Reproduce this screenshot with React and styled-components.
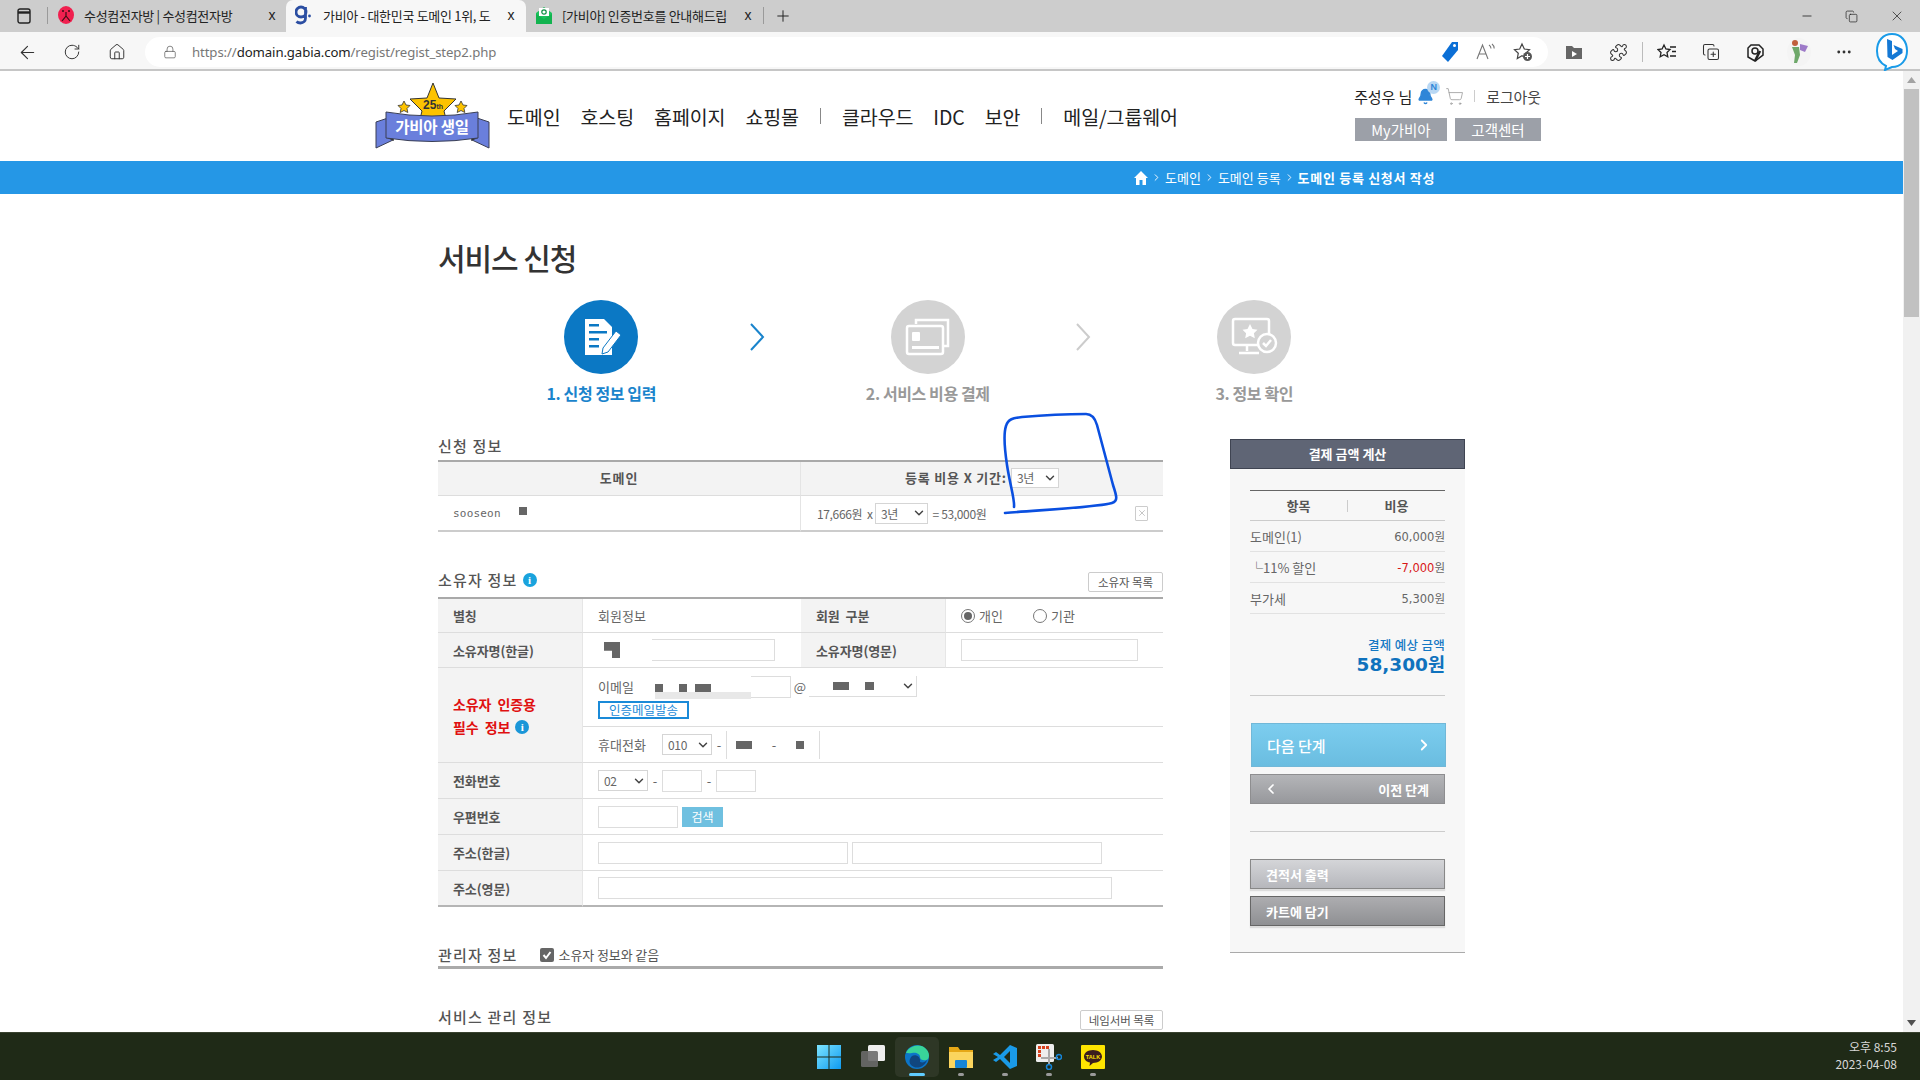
import React from "react";
import styled, { createGlobalStyle } from "styled-components";
import { ArrowLeft, RotateCw, Home, Lock, Puzzle, CopyPlus, Ellipsis, Minus, Copy, X, Plus, ChevronDown, ChevronRight, ChevronLeft, ShoppingCart, Bell } from "lucide-react";

const KR = `"Noto Sans CJK KR", "Liberation Sans", sans-serif`;
const DJ = `"DejaVu Sans", "Noto Sans CJK KR", sans-serif`;

const Global = createGlobalStyle`
  * { box-sizing: border-box; }
  html, body { margin: 0; padding: 0; overflow: hidden; background: #fff; }
  body { font-family: ${KR}; color: #555; }
`;

const Screen = styled.div`width:1920px;height:1080px;display:flex;flex-direction:column;overflow:hidden;`;

/* browser chrome */
const TabStrip = styled.div`height:32px;background:#cdcdcd;display:flex;align-items:stretch;flex:none;`;
const SideBtn = styled.div`width:47px;display:flex;align-items:center;justify-content:center;color:#222;`;
const TabSep = styled.div`width:1px;margin:7px 0 8px;background:#9a9a9a;flex:none;`;
const Tab = styled.div`
  width:${p => p.$w}px;flex:none;display:flex;align-items:center;padding:0 ${p => p.$pr}px 2px ${p => p.$pl}px;
  font-size:13px;color:#222;white-space:nowrap;
  ${p => p.$active ? "background:#f7f7f7;border-radius:7px 7px 0 0;" : ""}
`;
const TabIconSlot = styled.div`width:16px;height:18px;flex:none;display:flex;align-items:center;justify-content:center;`;
const TabText = styled.div`flex:1;margin-left:${p => p.$ml}px;letter-spacing:-0.3px;`;
const TabClose = styled.div`width:14px;font-family:"Liberation Sans",sans-serif;font-size:14px;line-height:14px;text-align:center;color:#222;flex:none;`;
const NewTab = styled.div`width:38px;display:flex;align-items:center;justify-content:center;color:#222;`;
const WinControls = styled.div`margin-left:auto;display:flex;align-items:center;padding-right:15px;gap:31px;color:#222;`;

const AddrBar = styled.div`height:39px;background:#f7f7f7;border-bottom:2px solid #c6c6c6;display:flex;align-items:center;padding-left:5px;flex:none;padding-top:3px;`;
const Slot = styled.div`width:${p => p.$w || 44}px;height:30px;flex:none;display:flex;align-items:center;justify-content:center;color:#333;`;
const NavSlots = styled.div`display:flex;gap:1px;`;
const Pill = styled.div`flex:1;height:30px;margin-left:6px;background:#fff;border-radius:15px;display:flex;align-items:center;padding:0 7px 0 18px;`;
const Url = styled.div`margin-left:15px;font-size:13.2px;color:#777;font-family:"Noto Sans","Liberation Sans",sans-serif;letter-spacing:-0.1px;b{font-weight:400;color:#222;}`;
const PillTools = styled.div`margin-left:auto;display:flex;`;
const Tools = styled.div`display:flex;align-items:center;margin-left:4px;padding-right:3px;`;
const ToolSep = styled.div`width:1px;height:20px;background:#bbb;margin:0 2px;`;

/* viewport */
const Viewport = styled.div`flex:1;display:flex;min-height:0;`;
const Page = styled.div`width:1903px;flex:none;overflow:hidden;position:relative;background:#fff;`;
const ScrollBar = styled.div`width:17px;flex:none;background:#f1f1f1;display:flex;flex-direction:column;align-items:center;`;
const ScrollArrow = styled.div`height:18px;display:flex;align-items:center;justify-content:center;`;
const ScrollThumb = styled.div`width:15px;height:228px;background:#c1c1c1;`;

/* site header */
const SiteHeader = styled.header`height:90px;display:flex;padding-left:375px;padding-right:362px;`;
const LogoBox = styled.div`width:115px;margin-top:11px;flex:none;`;
const Nav = styled.nav`display:flex;align-items:center;gap:20px;margin-left:17px;height:90px;font-size:19.5px;color:#222;letter-spacing:-0.1px;white-space:nowrap;`;
const NavSep = styled.span`width:1px;height:16px;background:#888;margin:0 1px;`;
const UserBox = styled.div`margin-left:auto;width:189px;padding-top:12px;display:flex;flex-direction:column;align-items:flex-end;`;
const UserLine = styled.div`height:26px;display:flex;align-items:center;font-size:15px;color:#222;white-space:nowrap;letter-spacing:-.1px;`;
const Logout = styled.span`color:#444;`;
const BellWrap = styled.span`position:relative;display:flex;margin:0 11px 0 5px;color:#2f86d8;`;
const BellBadge = styled.span`position:absolute;right:-6px;top:-7px;width:13px;height:13px;border-radius:50%;background:#b9d8f4;color:#2f86d8;font:700 9px/13px "Liberation Sans",sans-serif;text-align:center;`;
const UserSep = styled.span`width:1px;height:12px;background:#ccc;margin:0 11px 0 10px;`;
const UserBtns = styled.div`display:flex;gap:8px;margin-top:9px;`;
const GrayBtn = styled.div`width:${p => p.$w}px;height:23px;background:#9ca0a8;color:#fff;font-size:14.5px;display:flex;align-items:center;justify-content:center;`;

const Crumb = styled.div`height:33px;background:#2597e6;color:#fff;display:flex;align-items:center;padding-left:1134px;font-size:13px;white-space:nowrap;gap:3px;b{font-weight:700;letter-spacing:.7px;}`;

/* body */
const Body = styled.div`padding-left:438px;`;
const Title = styled.h1`margin:43px 0 0;height:40px;line-height:40px;font-size:30px;font-weight:500;letter-spacing:-1.1px;color:#333;`;
const Steps = styled.div`display:flex;margin-top:23px;height:106px;`;
const Step = styled.div`width:326.5px;flex:none;display:flex;flex-direction:column;align-items:center;`;
const Circle = styled.div`width:74px;height:74px;border-radius:50%;background:${p => p.$on ? "#0b78c4" : "#d3d3d3"};display:flex;align-items:center;justify-content:center;`;
const StepLabel = styled.div`margin-top:7px;height:24px;line-height:24px;font-size:16px;font-weight:700;letter-spacing:-0.4px;color:${p => p.$on ? "#1a84cc" : "#999"};`;
const StepArrow = styled.div`width:16px;height:28px;flex:none;margin:23px 0 0 -16px;`;

const Columns = styled.div`display:flex;align-items:flex-start;margin-top:33px;`;
const Left = styled.div`width:725px;flex:none;`;
const SectionHead = styled.div`display:flex;align-items:flex-start;height:${p => p.$h}px;margin-top:${p => p.$mt || 0}px;`;
const SectionTitle = styled.h2`margin:${p => p.$mt || 0}px 0 0;font-size:15px;line-height:18px;font-weight:500;color:#555;letter-spacing:1.2px;white-space:nowrap;display:flex;align-items:center;`;
const HeadBtn = styled.div`margin-left:auto;margin-top:${p => p.$mt || 0}px;width:${p => p.$w}px;height:20px;border:1px solid #ccc;border-radius:2px;background:#fff;font-size:11.5px;color:#555;display:flex;align-items:center;justify-content:center;letter-spacing:-0.1px;`;
const Info = styled.span`width:14px;height:14px;border-radius:50%;background:${p => p.$c || "#1aa3dd"};color:#fff;font:700 11px/14px "Liberation Serif",serif;text-align:center;margin-left:5px;display:inline-block;flex:none;letter-spacing:0;`;

const Tbl = styled.table`width:725px;border-collapse:separate;border-spacing:0;table-layout:fixed;border-top:2px solid #a9a9a9;font-size:12px;`;
const HCell = styled.th`height:${p => p.$h}px;background:#f3f3f3;border-bottom:1px solid #ddd;font-size:13px;font-weight:700;color:#555;${p => p.$line ? "border-left:1px solid #e4e4e4;" : ""}padding:0 0 2px;letter-spacing:.8px;`;
const HInner = styled.div`display:flex;align-items:center;justify-content:center;padding-left:${p => p.$pl || 0}px;white-space:nowrap;gap:4px;letter-spacing:.8px;`;
const RowCell = styled.td`height:36px;border-bottom:2px solid #ccc;padding:0;${p => p.$line ? "border-left:1px solid #e4e4e4;" : ""}`;
const CellFlex = styled.div`display:flex;align-items:center;padding-left:${p => p.$pl}px;color:#666;white-space:nowrap;letter-spacing:-.35px;`;
const Mono = styled.span`font-family:"DejaVu Sans Mono",monospace;font-size:11px;letter-spacing:.2px;color:#666;`;
const Mask = styled.span`display:inline-block;width:${p => p.$w}px;height:${p => p.$h}px;background:#666;flex:none;margin-left:${p => p.$ml || 0}px;margin-top:${p => p.$mt || 0}px;`;
const MaskStep = styled(Mask)`clip-path:polygon(0 0,100% 0,100% 100%,50% 100%,50% 55%,0 55%);`;
const Sel = styled.div`width:${p => p.$w}px;height:${p => p.$hh || 21}px;border:1px solid #d5d5d5;background:#fff;display:flex;align-items:center;justify-content:space-between;padding:0 1px 0 5px;font-size:12px;font-weight:400;color:#666;flex:none;margin:${p => p.$m || 0};letter-spacing:-.3px;`;
const RemoveBox = styled.div`width:13px;height:15px;border:1px solid #ccc;border-radius:1px;margin-left:auto;margin-right:15px;display:flex;align-items:center;justify-content:center;color:#777;`;

const FormTbl = styled(Tbl)`border-bottom:0;`;
const Th = styled.th`
  height:${p => p.$h}px;background:#f3f3f3;border-bottom:1px solid #ddd;padding:0 0 0 15px;text-align:left;font-size:${p => p.$red ? 14 : 13}px;font-weight:700;
  color:${p => p.$red ? "#e01010" : "#555"};border-right:1px solid #e6e6e6;letter-spacing:-.1px;word-spacing:3px;white-space:nowrap;
`;
const Td = styled.td`height:${p => p.$h}px;border-bottom:1px solid #ddd;padding:0 0 0 ${p => p.$pl ?? 15}px;color:#666;font-size:13px;`;
const LastTh = styled(Th)`border-bottom:2px solid #b5b5b5;`;
const LastTd = styled(Td)`border-bottom:2px solid #b5b5b5;`;
const RedLine = styled.div`height:23px;display:flex;align-items:center;`;
const FRow = styled.div`display:flex;align-items:center;white-space:nowrap;`;
const Input = styled.div`width:${p => p.$w}px;height:22px;border:1px solid #ddd;${p => p.$nl ? "border-left:0;" : ""}background:#fff;flex:none;margin-left:${p => p.$ml || 0}px;`;
const Radio = styled.span`width:14px;height:14px;border:1px solid #777;border-radius:50%;display:inline-flex;align-items:center;justify-content:center;background:#fff;flex:none;margin-right:4px;&::after{content:"";width:8px;height:8px;border-radius:50%;background:${p => p.$on ? "#666" : "transparent"};}`;
const RadioText = styled.span`width:${p => p.$w}px;flex:none;`;
const EmailLabel = styled.span`width:57px;flex:none;`;
const EmailMask = styled.div`width:96px;height:22px;flex:none;display:flex;align-items:flex-start;padding-top:8px;position:relative;&::after{content:"";position:absolute;left:0;right:0;bottom:-1px;height:7px;background:#e8e8e8;}`;
const At = styled.span`width:18px;text-align:center;flex:none;`;
const MaskSelect = styled.div`width:108px;height:21px;flex:none;border-bottom:1px solid #ddd;border-right:1px solid #ddd;display:flex;align-items:center;padding:0 1px 0 24px;`;
const SendBtn = styled.div`width:91px;height:18px;border:2px solid #1a8ad8;color:#1a8ad8;font-size:12.5px;line-height:12px;display:flex;align-items:center;justify-content:center;margin-top:3px;background:#fff;`;
const Dash = styled.span`width:${p => p.$w || 14}px;text-align:center;flex:none;`;
const PhoneLabel = styled.span`width:64px;flex:none;`;
const MaskPhone = styled.div`width:94px;height:28px;border-left:1px solid #ddd;border-right:1px solid #ddd;display:flex;align-items:center;padding-left:9px;flex:none;`;
const SearchBtn = styled.div`width:41px;height:20px;margin-left:4px;background:#6fc0e0;color:#fff;font-size:12px;display:flex;align-items:center;justify-content:center;`;
const CheckBox = styled.span`width:14px;height:14px;border-radius:2px;background:#666;color:#fff;display:inline-flex;align-items:center;justify-content:center;margin-left:22px;margin-right:5px;flex:none;`;
const CheckText = styled.span`font-size:13px;font-weight:400;color:#555;letter-spacing:-.1px;`;
const ThickRule = styled.div`height:3px;background:#aaa;`;

/* side panel */
const Panel = styled.aside`width:235px;margin-left:67px;flex:none;background:#f7f7f7;border-bottom:1px solid #aaa;height:514px;`;
const PanelHead = styled.div`height:30px;background:#5f6575;border:1px solid #3f4452;color:#fff;font-size:13px;font-weight:700;display:flex;align-items:center;justify-content:center;padding-bottom:2px;`;
const PanelInner = styled.div`padding:21px 20px 0;`;
const PHeadRow = styled.div`height:31px;border-top:1px solid #666;border-bottom:1px solid #ccc;display:flex;align-items:center;font-size:13px;font-weight:700;color:#555;`;
const PHeadCell = styled.div`flex:1;text-align:center;${p => p.$line ? "border-left:1px solid #ccc;" : ""}line-height:12px;`;
const PRow = styled.div`height:31px;border-bottom:1px solid #e2e2e2;display:flex;align-items:center;justify-content:space-between;font-size:11.5px;color:#666;font-family:${DJ};`;
const PLabel = styled.span`font-family:${KR};font-size:13px;`;
const Red = styled.span`color:#d81818;`;
const TotalLabel = styled.div`margin-top:23px;text-align:right;font-size:12.5px;color:#1478c4;font-weight:500;line-height:16px;letter-spacing:.3px;`;
const TotalValue = styled.div`text-align:right;font-family:${DJ};font-weight:700;font-size:18.5px;line-height:24px;color:#0f72bd;margin-top:0;`;
const PRule = styled.div`height:1px;background:#ccc;margin-top:${p => p.$mt}px;`;
const NextBtn = styled.div`height:44px;margin:27px -1px 0 1px;background:linear-gradient(#7ccdef,#6abde0);border:1px solid #71b8d8;color:#fff;font-size:15px;font-weight:500;display:flex;align-items:center;justify-content:space-between;padding:0 12px 0 15px;`;
const PrevBtn = styled.div`height:30px;margin-top:7px;background:linear-gradient(#b4b5b8,#97989c);border:1px solid #8e8e90;color:#fff;font-size:13px;font-weight:700;display:flex;align-items:center;justify-content:space-between;padding:0 15px 0 12px;`;
const ActionBtn = styled.div`height:30px;margin-top:${p => p.$mt}px;border:1px solid ${p => p.$dark ? "#666" : "#888"};background:${p => p.$dark ? "linear-gradient(#adadb0,#8f9093)" : "linear-gradient(#d4d5d8,#b6b7bc)"};color:#fff;font-size:13px;font-weight:700;display:flex;align-items:center;padding-left:15px;box-shadow:0 2px 1px #ddd;`;

/* annotation */
const Scribble = styled.svg`position:absolute;left:0;top:0;pointer-events:none;`;

/* taskbar */
const Taskbar = styled.div`height:48px;flex:none;background:#1f2a17;border-top:1px solid #39422f;display:flex;align-items:center;position:relative;padding-left:807px;`;
const TaskItem = styled.div`width:44px;height:40px;display:flex;align-items:center;justify-content:center;position:relative;border-radius:5px;${p => p.$on ? "background:#2e3726;" : ""}
  &::after{content:"";position:absolute;left:50%;bottom:${p => p.$dot ? "1px" : "auto"};transform:translateX(-50%);width:${p => p.$on ? 16 : 6}px;height:3px;border-radius:2px;background:${p => p.$on ? "#60cdff" : p.$dot ? "#9a9a9a" : "transparent"};}`;
const Clock = styled.div`position:absolute;right:23px;top:5px;text-align:right;font-size:12px;line-height:17px;color:#d8d8d8;font-family:"Noto Sans CJK KR",sans-serif;`;

const Doc = () => (
  <svg width="44" height="46" viewBox="0 0 44 46">
    <path d="M6 5h19l8 8v28H6z" fill="#fff"/>
    <g fill="#0b78c4"><rect x="10" y="10" width="10" height="2.5"/><rect x="10" y="17" width="18" height="2.5"/><rect x="10" y="24" width="10" height="2.5"/><rect x="10" y="31" width="10" height="2.5"/></g>
    <path d="M24 34l13-17 5 4-13 17-6 2z" fill="#fff" stroke="#0b78c4"/>
  </svg>
);
const Cards = () => (
  <svg width="48" height="40" viewBox="0 0 48 40" fill="none" stroke="#fff" strokeWidth="2.5">
    <path d="M12 7V3h32v26h-6"/><rect x="3" y="9" width="36" height="28" rx="2" fill="#d3d3d3"/>
    <rect x="8" y="15" width="8" height="9" rx="1" fill="#fff" stroke="none"/><rect x="8" y="29" width="27" height="3" fill="#fff" stroke="none"/>
  </svg>
);
const Monitor = () => (
  <svg width="50" height="44" viewBox="0 0 50 44" fill="none" stroke="#fff" strokeWidth="2.5">
    <rect x="4" y="4" width="36" height="26" rx="2"/><path d="M18 30v6M10 38h20"/>
    <path d="M21 9l2.5 5 5 .7-3.6 3.6.9 5-4.8-2.5-4.8 2.5.9-5-3.6-3.6 5-.7z" fill="#fff" stroke="none"/>
    <circle cx="38" cy="28" r="9" fill="#d3d3d3"/><path d="M34 28l3 3 5-6"/>
  </svg>
);
const Chevron = ({ c }) => (
  <svg width="16" height="28" viewBox="0 0 16 28" fill="none" stroke={c} strokeWidth="2"><path d="M2 1l12 13L2 27"/></svg>
);
const Logo = () => (
  <svg width="115" height="68" viewBox="0 0 115 68">
    <path d="M1 40l12-4 5 22-17 8zM114 40l-12-4-5 22 17 8z" fill="#6a7fdc" stroke="#3a3f55"/>
    <path d="M12 56l7 3-1-5zM103 56l-7 3 1-5z" fill="#333"/>
    <path d="M58 1l6 15 17 1-12 12 3 12H44l3-12-12-12 17-1z" fill="#fdc300" stroke="#333"/>
    <path d="M29 19l2 4 4 .5-3 3 .8 4-3.8-2-3.8 2 .8-4-3-3 4-.5zM86 19l2 4 4 .5-3 3 .8 4-3.8-2-3.8 2 .8-4-3-3 4-.5z" fill="#fdc300" stroke="#333" strokeWidth=".8"/>
    <path d="M11 30q46 8 92 0v26q-46 7-92 0z" fill="#6a7fdc" stroke="#3a3f55"/>
    <text x="58" y="27" textAnchor="middle" fontFamily="Liberation Sans" fontWeight="700" fontSize="12" fill="#333">25<tspan fontSize="7">th</tspan></text>
    <text x="57" y="51" textAnchor="middle" fontFamily="Noto Sans CJK KR" fontWeight="700" fontSize="15.5" letterSpacing="-.2" fill="#fff">가비아 생일</text>
  </svg>
);
const Chk = ({ s = 10 }) => <ChevronDown size={s + 4} strokeWidth={2.5} color="#444" />;

const TabsIcon = () => <svg width="14" height="16" viewBox="0 0 14 16" fill="none" stroke="#222" strokeWidth="1.4"><rect x="1" y="1" width="12" height="14" rx="2"/><path d="M1 4.5h12" strokeWidth="2.4"/></svg>;
const RedFace = () => <svg width="16" height="18" viewBox="0 0 16 18"><ellipse cx="8" cy="9" rx="8" ry="9" fill="#f0204f"/><path d="M8 6v4l-4 5M8 10l4 5" stroke="#3a0d12" strokeWidth="1.2" fill="none"/><circle cx="5" cy="5" r="1" fill="#3a0d12"/><circle cx="11" cy="5" r="1" fill="#3a0d12"/></svg>;
const GLogo = () => <svg width="16" height="20" viewBox="0 0 16 20"><path d="M6 2a4.5 4.5 0 100 10 4.5 4.5 0 000-10zM10.5 2v11c0 3-2 5-5 5-1.5 0-3-.5-4-1.5" fill="none" stroke="#2b4ea2" strokeWidth="2.8"/><circle cx="14.5" cy="11" r="1.4" fill="#2b4ea2"/></svg>;
const GreenMail = () => <svg width="16" height="18" viewBox="0 0 16 18"><path d="M0 7l8-6 8 6v11H0z" fill="#1cc25d"/><rect x="3" y="2" width="10" height="8" fill="#fff"/><circle cx="8" cy="6" r="2.2" fill="none" stroke="#0e8f43" strokeWidth="1.2"/><path d="M0 8l8 5 8-5v10H0z" fill="#12b34f"/></svg>;
const TagIcon = () => <svg width="18" height="22" viewBox="0 0 18 22"><path d="M11 1h6v8L7 21 1 15z" fill="#0b6fd6"/><circle cx="13.5" cy="4.5" r="1.5" fill="#fff"/></svg>;
const ReadAloud = () => <svg width="20" height="18" viewBox="0 0 20 18" fill="none" stroke="#777" strokeWidth="1.1"><path d="M1 16L6.5 2 12 16M3 11h7"/><path d="M13 2c1.5 1 2 2 2 3.5M16 1c1.5 1.2 2.2 2.6 2.2 4.5"/></svg>;
const FavAdd = () => <svg width="20" height="20" viewBox="0 0 20 20" fill="none" stroke="#444" strokeWidth="1.2"><path d="M9 2l2.3 5 5.2.6-3.8 3.6 1 5.3L9 13.8 4.300 16.500l1-5.300L1.500 7.600 6.700 7z"/><circle cx="14.500" cy="14.500" r="4.500" fill="#555" stroke="none"/><path d="M14.500 12v5M12 14.500h5" stroke="#fff"/></svg>;
const FolderPlay = () => <svg width="18" height="18" viewBox="0 0 18 18"><path d="M1 3h6l2 2h8v11H1z" fill="#666"/><path d="M7 8l5 3-5 3z" fill="#fff"/></svg>;
const FavList = () => <svg width="20" height="18" viewBox="0 0 20 18" fill="none" stroke="#222" strokeWidth="1.3"><path d="M7 2l1.900 4 4.100.5-3 3 .8 4.300L7 11.700l-3.800 2.100.8-4.300-3-3 4.100-.5z"/><path d="M13 4h6M15 8.500h4M13 13h6"/></svg>;
const Shield = () => <svg width="18" height="20" viewBox="0 0 18 20" fill="none" stroke="#222" strokeWidth="1.5"><path d="M5 3h8l4 4v6l-8 6-7-4V6z"/><circle cx="9" cy="9" r="3"/><path d="M9 19l5-10" strokeWidth="2.500"/></svg>;
const Avatar = () => <svg width="24" height="28" viewBox="0 0 24 28"><ellipse cx="12" cy="14" rx="12" ry="14" fill="#f4f4f4"/><circle cx="8" cy="5" r="3" fill="#c0603c"/><path d="M5 9h7l1 8-3 8H7l1-8z" fill="#6ea86a"/><path d="M13 6l8 2-3 6-5-2z" fill="#9d7ac8"/></svg>;
const Bing = () => <svg width="32" height="38" viewBox="0 0 32 38"><path d="M16 1c9 0 15 7 15 17 0 9-6 16-15 16l-7 3 1-4C4 30 1 25 1 18 1 8 7 1 16 1z" fill="#fff" stroke="#1a9be8" strokeWidth="2"/><path d="M11 6l5 2v14l6-4-3-2-1.500-4 9 4v4l-10 7-5-3z" fill="#1478d4"/></svg>;
const HomeSolid = () => <svg width="14" height="14" viewBox="0 0 14 14"><path d="M7 0l7 7h-2v7H8.500V9h-3v5H2V7H0z" fill="#fff"/></svg>;

const WinLogo = () => <svg width="24" height="24" viewBox="0 0 24 24"><defs><linearGradient id="wg" x1="0" y1="0" x2="1" y2="1"><stop offset="0" stopColor="#7ce4ff"/><stop offset="1" stopColor="#0f9bf0"/></linearGradient></defs><path d="M0 0h11.500v11.500H0zM12.500 0H24v11.500H12.500zM0 12.500h11.500V24H0zM12.500 12.500H24V24H12.500z" fill="url(#wg)"/></svg>;
const TaskView = () => <svg width="24" height="24" viewBox="0 0 24 24"><rect x="7" y="0" width="17" height="16" rx="1.500" fill="#eee"/><rect x="0" y="6" width="17" height="16" rx="1.500" fill="#6a6a6a" fillOpacity=".9"/></svg>;
const Edge = () => <svg width="24" height="24" viewBox="0 0 24 24"><circle cx="12" cy="12" r="12" fill="#0c75c8"/><path d="M1 8C4 1 14-2 20 3c4 3 5 8 3 11-2 2-8 2-8-2 0-3-4-5-8-4-3 .5-5 0-6 0z" fill="#39d49a"/><path d="M7 11c4-2 9 1 8 6 3 1 5 0 7-2-2 6-8 9-13 7C4 20 3 15 7 11z" fill="#10467f"/></svg>;
const Explorer = () => <svg width="24" height="24" viewBox="0 0 24 24"><path d="M0 2h9l2 3h13v18H0z" fill="#e6a817"/><path d="M0 7h24v16H0z" fill="#fbd55e"/><rect x="6" y="15" width="12" height="8" rx="1" fill="#1685d8"/></svg>;
const VSCode = () => <svg width="24" height="24" viewBox="0 0 24 24"><path d="M17 0l7 3v18l-7 3-10-10-4 3-3-2 5-3-5-3 3-2 4 3z" fill="#1a9ae8"/><path d="M17 6l-6 6 6 6z" fill="#1f2a17"/></svg>;
const Snip = () => <svg width="26" height="26" viewBox="0 0 26 26"><rect x="0" y="0" width="18" height="18" rx="1.500" fill="#eee"/><g fill="#d8421e"><rect x="2" y="2" width="3" height="3"/><rect x="6" y="2" width="3" height="3"/><rect x="10" y="2" width="3" height="3"/><rect x="2" y="6" width="3" height="3"/><rect x="2" y="10" width="3" height="3"/></g><path d="M13 5v16M5 14h17" stroke="#aaa" strokeWidth="2"/><circle cx="23" cy="13" r="2.500" fill="none" stroke="#1685d8" strokeWidth="1.500"/><circle cx="13" cy="23" r="2.500" fill="none" stroke="#1685d8" strokeWidth="1.500"/></svg>;
const Kakao = () => <svg width="24" height="24" viewBox="0 0 24 24"><rect width="24" height="24" rx="1" fill="#fde400"/><path d="M12 5c5 0 9 2.800 9 6.500S17 18 12 18l-3.500 3 .5-3.500C5.500 17 3 14.500 3 11.500 3 7.800 7 5 12 5z" fill="#3b1e1e"/><text x="12" y="13.500" textAnchor="middle" fontSize="5.500" fontWeight="700" fontFamily="Liberation Sans" fill="#fde400">TALK</text></svg>;

export default function App() {
  return (
    <Screen>
      <Global />
      <TabStrip>
        <SideBtn><TabsIcon /></SideBtn>
        <TabSep />
        <Tab $w={238} $pl={10} $pr={7}>
          <TabIconSlot><RedFace /></TabIconSlot>
          <TabText $ml={10}>수성컴전자방 | 수성컴전자방</TabText>
          <TabClose>x</TabClose>
        </Tab>
        <Tab $w={240} $pl={9} $pr={8} $active>
          <TabIconSlot><GLogo /></TabIconSlot>
          <TabText $ml={12}>가비아 - 대한민국 도메인 1위, 도</TabText>
          <TabClose>x</TabClose>
        </Tab>
        <Tab $w={237} $pl={10} $pr={8}>
          <TabIconSlot><GreenMail /></TabIconSlot>
          <TabText $ml={10}>[가비아] 인증번호를 안내해드립</TabText>
          <TabClose>x</TabClose>
        </Tab>
        <TabSep />
        <NewTab><Plus size={18} strokeWidth={1.3} /></NewTab>
        <WinControls>
          <Minus size={14} strokeWidth={1.4} />
          <Copy size={13} strokeWidth={1.3} />
          <X size={16} strokeWidth={1.1} />
        </WinControls>
      </TabStrip>

      <AddrBar>
        <NavSlots>
          <Slot><ArrowLeft size={21} strokeWidth={1.3} /></Slot>
          <Slot><RotateCw size={18} strokeWidth={1.3} /></Slot>
          <Slot><Home size={18} strokeWidth={1.3} /></Slot>
        </NavSlots>
        <Pill>
          <Lock size={14} strokeWidth={1.2} color="#555" />
          <Url>https://<b>domain.gabia.com</b>/regist/regist_step2.php</Url>
          <PillTools>
            <Slot $w={36}><TagIcon /></Slot>
            <Slot $w={36}><ReadAloud /></Slot>
            <Slot $w={37}><FavAdd /></Slot>
          </PillTools>
        </Pill>
        <Tools>
          <Slot><FolderPlay /></Slot>
          <Slot><Puzzle size={19} strokeWidth={1.3} /></Slot>
          <ToolSep />
          <Slot><FavList /></Slot>
          <Slot><CopyPlus size={18} strokeWidth={1.4} /></Slot>
          <Slot><Shield /></Slot>
          <Slot><Avatar /></Slot>
          <Slot $w={46}><Ellipsis size={18} strokeWidth={1.8} /></Slot>
          <Slot $w={50}><Bing /></Slot>
        </Tools>
      </AddrBar>

      <Viewport>
        <Page>
          <SiteHeader>
            <LogoBox><Logo /></LogoBox>
            <Nav>
              <span>도메인</span><span>호스팅</span><span>홈페이지</span><span>쇼핑몰</span>
              <NavSep />
              <span>클라우드</span><span>IDC</span><span>보안</span>
              <NavSep />
              <span>메일/그룹웨어</span>
            </Nav>
            <UserBox>
              <UserLine>
                주성우 님
                <BellWrap><Bell size={17} fill="#2f86d8" /><BellBadge>N</BellBadge></BellWrap>
                <ShoppingCart size={19} strokeWidth={1} color="#999" />
                <UserSep />
                <Logout>로그아웃</Logout>
              </UserLine>
              <UserBtns>
                <GrayBtn $w={92}>My가비아</GrayBtn>
                <GrayBtn $w={86}>고객센터</GrayBtn>
              </UserBtns>
            </UserBox>
          </SiteHeader>

          <Crumb>
            <HomeSolid />
            <ChevronRight size={11} />
            <span>도메인</span>
            <ChevronRight size={11} />
            <span>도메인 등록</span>
            <ChevronRight size={11} />
            <b>도메인 등록 신청서 작성</b>
          </Crumb>

          <Body>
            <Title>서비스 신청</Title>
            <Steps>
              <Step>
                <Circle $on><Doc /></Circle>
                <StepLabel $on>1. 신청 정보 입력</StepLabel>
              </Step>
              <StepArrow><Chevron c="#1a84cc" /></StepArrow>
              <Step>
                <Circle><Cards /></Circle>
                <StepLabel>2. 서비스 비용 결제</StepLabel>
              </Step>
              <StepArrow><Chevron c="#ccc" /></StepArrow>
              <Step>
                <Circle><Monitor /></Circle>
                <StepLabel>3. 정보 확인</StepLabel>
              </Step>
            </Steps>

            <Columns>
              <Left>
                <SectionHead $h={21}><SectionTitle $mt={-2}>신청 정보</SectionTitle></SectionHead>
                <Tbl>
                  <colgroup><col width="362" /><col /></colgroup>
                  <thead>
                    <tr>
                      <HCell $h={34}>도메인</HCell>
                      <HCell $h={34} $line>
                        <HInner>등록 비용 X 기간: <Sel $w={48} $hh={20}>3년<Chk /></Sel></HInner>
                      </HCell>
                    </tr>
                  </thead>
                  <tbody>
                    <tr>
                      <RowCell>
                        <CellFlex $pl={15}><Mono>sooseon</Mono><Mask $w={8} $h={8} $ml={18} $mt={-4} /></CellFlex>
                      </RowCell>
                      <RowCell $line>
                        <CellFlex $pl={16}>
                          17,666원&nbsp;&nbsp;x&nbsp;
                          <Sel $w={53} $hh={21}>3년<Chk /></Sel>
                          &nbsp;&nbsp;= 53,000원
                          <RemoveBox><X size={10} strokeWidth={1} /></RemoveBox>
                        </CellFlex>
                      </RowCell>
                    </tr>
                  </tbody>
                </Tbl>

                <SectionHead $h={26} $mt={39}>
                  <SectionTitle>소유자 정보<Info>i</Info></SectionTitle>
                  <HeadBtn $w={75} $mt={1}>소유자 목록</HeadBtn>
                </SectionHead>
                <FormTbl>
                  <colgroup><col width="145" /><col width="218" /><col width="145" /><col /></colgroup>
                  <tbody>
                    <tr>
                      <Th $h={34}>별칭</Th>
                      <Td $h={34}>회원정보</Td>
                      <Th $h={34}>회원 구분</Th>
                      <Td $h={34}>
                        <FRow>
                          <Radio $on /><RadioText $w={54}>개인</RadioText>
                          <Radio /><RadioText $w={40}>기관</RadioText>
                        </FRow>
                      </Td>
                    </tr>
                    <tr>
                      <Th $h={35}>소유자명(한글)</Th>
                      <Td $h={35} $pl={21}>
                        <FRow>
                          <MaskStep $w={16} $h={16} />
                          <Input $w={123} $ml={32} $nl />
                        </FRow>
                      </Td>
                      <Th $h={35}>소유자명(영문)</Th>
                      <Td $h={35}><Input $w={177} /></Td>
                    </tr>
                    <tr>
                      <Th $h={95} $red rowSpan={2}>
                        <RedLine>소유자 인증용</RedLine>
                        <RedLine>필수 정보<Info $c="#1a96d8">i</Info></RedLine>
                      </Th>
                      <Td $h={59} colSpan={3}>
                        <FRow>
                          <EmailLabel>이메일</EmailLabel>
                          <EmailMask>
                            <Mask $w={8} $h={8} />
                            <Mask $w={8} $h={8} $ml={16} />
                            <Mask $w={16} $h={8} $ml={8} />
                          </EmailMask>
                          <Input $w={40} $nl />
                          <At>@</At>
                          <MaskSelect>
                            <Mask $w={16} $h={8} />
                            <Mask $w={9} $h={8} $ml={16} />
                            <span style={{ marginLeft: "auto", display: "flex" }}><Chk /></span>
                          </MaskSelect>
                        </FRow>
                        <SendBtn>인증메일발송</SendBtn>
                      </Td>
                    </tr>
                    <tr>
                      <Td $h={36} colSpan={3}>
                        <FRow>
                          <PhoneLabel>휴대전화</PhoneLabel>
                          <Sel $w={50}>010<Chk /></Sel>
                          <Dash>-</Dash>
                          <MaskPhone>
                            <Mask $w={16} $h={8} />
                            <Dash $w={44}>-</Dash>
                            <Mask $w={8} $h={8} />
                          </MaskPhone>
                        </FRow>
                      </Td>
                    </tr>
                    <tr>
                      <Th $h={36}>전화번호</Th>
                      <Td $h={36} colSpan={3}>
                        <FRow>
                          <Sel $w={50}>02<Chk /></Sel>
                          <Dash>-</Dash>
                          <Input $w={40} />
                          <Dash>-</Dash>
                          <Input $w={40} />
                        </FRow>
                      </Td>
                    </tr>
                    <tr>
                      <Th $h={36}>우편번호</Th>
                      <Td $h={36} colSpan={3}>
                        <FRow><Input $w={80} /><SearchBtn>검색</SearchBtn></FRow>
                      </Td>
                    </tr>
                    <tr>
                      <Th $h={36}>주소(한글)</Th>
                      <Td $h={36} colSpan={3}>
                        <FRow><Input $w={250} /><Input $w={250} $ml={4} /></FRow>
                      </Td>
                    </tr>
                    <tr>
                      <LastTh $h={36}>주소(영문)</LastTh>
                      <LastTd $h={36} colSpan={3}><Input $w={514} /></LastTd>
                    </tr>
                  </tbody>
                </FormTbl>

                <SectionHead $h={20} $mt={39}>
                  <SectionTitle>관리자 정보<CheckBox><svg width="10" height="10" viewBox="0 0 10 10" fill="none" stroke="#fff" strokeWidth="2"><path d="M1.500 5l2.500 3 4.500-6" /></svg></CheckBox><CheckText>소유자 정보와 같음</CheckText></SectionTitle>
                </SectionHead>
                <ThickRule />
                <SectionHead $h={30} $mt={39}>
                  <SectionTitle>서비스 관리 정보</SectionTitle>
                  <HeadBtn $w={83} $mt={2}>네임서버 목록</HeadBtn>
                </SectionHead>
              </Left>

              <Panel>
                <PanelHead>결제 금액 계산</PanelHead>
                <PanelInner>
                  <PHeadRow><PHeadCell>항목</PHeadCell><PHeadCell $line>비용</PHeadCell></PHeadRow>
                  <PRow><PLabel>도메인(1)</PLabel><span>60,000원</span></PRow>
                  <PRow><PLabel>└11% 할인</PLabel><span><Red>-7,000</Red>원</span></PRow>
                  <PRow><PLabel>부가세</PLabel><span>5,300원</span></PRow>
                  <TotalLabel>결제 예상 금액</TotalLabel>
                  <TotalValue>58,300원</TotalValue>
                  <PRule $mt={18} />
                  <NextBtn>다음 단계<ChevronRight size={18} strokeWidth={2.4} /></NextBtn>
                  <PrevBtn><ChevronLeft size={16} strokeWidth={2.6} />이전 단계</PrevBtn>
                  <PRule $mt={27} />
                  <ActionBtn $mt={27}>견적서 출력</ActionBtn>
                  <ActionBtn $mt={7} $dark>카트에 담기</ActionBtn>
                </PanelInner>
              </Panel>
            </Columns>
          </Body>

          <Scribble width="1903" height="961" viewBox="0 71 1903 961">
            <path d="M1014 507C1015 500 1010 485 1007 465C1004 445 1004 432 1006 426C1008 419 1013 418 1022 417C1045 415 1070 414 1086 414C1092 414 1095 418 1097 425L1113 485C1117 497 1118 501 1112 503C1100 507 1040 510 1005 513" fill="none" stroke="#0a4fe0" strokeWidth="2.6" strokeLinecap="round" />
          </Scribble>
        </Page>
        <ScrollBar>
          <ScrollArrow><svg width="9" height="6"><path d="M4.500 0L9 6H0z" fill="#a3a3a3" /></svg></ScrollArrow>
          <ScrollThumb />
          <ScrollArrow style={{ marginTop: "auto" }}><svg width="9" height="6"><path d="M4.500 6L9 0H0z" fill="#505050" /></svg></ScrollArrow>
        </ScrollBar>
      </Viewport>

      <Taskbar>
        <TaskItem><WinLogo /></TaskItem>
        <TaskItem><TaskView /></TaskItem>
        <TaskItem $on $dot><Edge /></TaskItem>
        <TaskItem $dot><Explorer /></TaskItem>
        <TaskItem $dot><VSCode /></TaskItem>
        <TaskItem $dot><Snip /></TaskItem>
        <TaskItem $dot><Kakao /></TaskItem>
        <Clock>오후 8:55<br />2023-04-08</Clock>
      </Taskbar>
    </Screen>
  );
}
